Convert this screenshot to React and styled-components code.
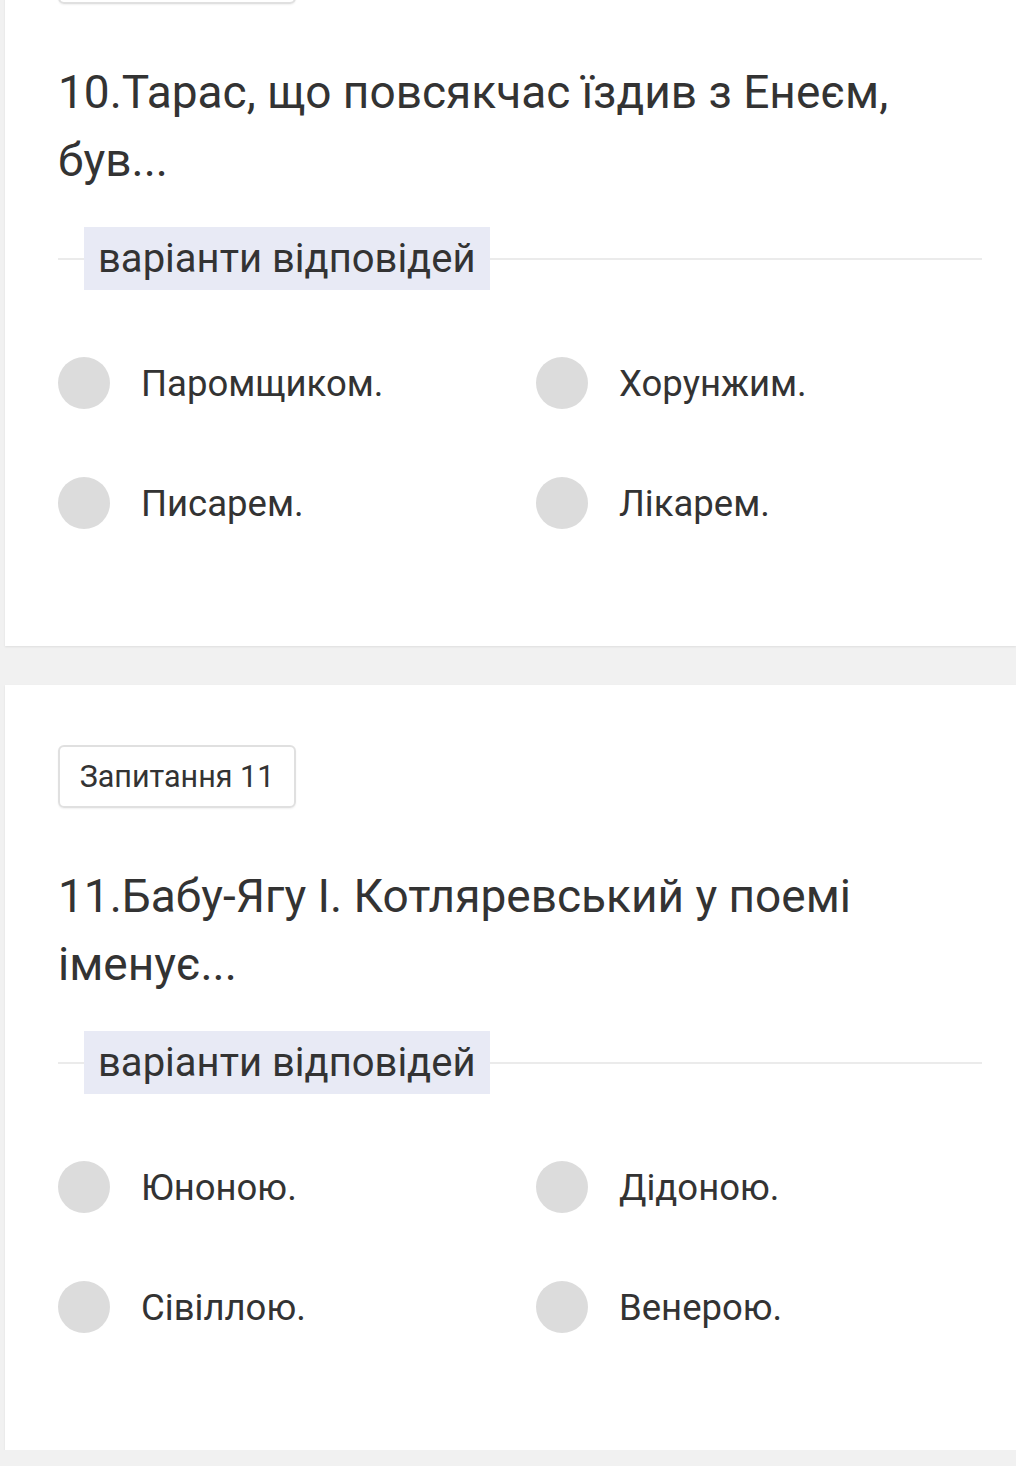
import React from "react";
import styled, { createGlobalStyle } from "styled-components";

const GlobalStyle = createGlobalStyle`
  body {
    margin: 0;
    background: #f1f1f1;
    font-family: Roboto, "Liberation Sans", sans-serif;
    color: #333;
    overflow: hidden;
  }
`;

const questions = [
  {
    num: 10,
    text: "10.Тарас, що повсякчас їздив з Енеєм, був...",
    options: ["Паромщиком.", "Хорунжим.", "Писарем.", "Лікарем."],
  },
  {
    num: 11,
    text: "11.Бабу-Ягу І. Котляревський у поемі іменує...",
    options: ["Юноною.", "Дідоною.", "Сівіллою.", "Венерою."],
  },
];

const App = () => {
  return (
    <>
      <GlobalStyle />
      <Page>
        {questions.map((q) => (
          <Card key={q.num}>
            <Tag>Запитання {q.num}</Tag>
            <Question>{q.text}</Question>
            <Divider>
              <DividerLabel>варіанти відповідей</DividerLabel>
            </Divider>
            <Options>
              {q.options.map((o) => (
                <Option key={o}>
                  <Radio />
                  <span>{o}</span>
                </Option>
              ))}
            </Options>
          </Card>
        ))}
      </Page>
    </>
  );
};

const Page = styled.div`
  display: flex;
  flex-direction: column;
  gap: 39px;
  margin-top: -119px;
  padding-left: 5px;
`;

const Card = styled.section`
  background: #fff;
  height: 765px;
  box-sizing: border-box;
  padding: 60px 34px 0 53px;
  box-shadow: 0 1px 2px rgba(0, 0, 0, 0.08);
`;

const Tag = styled.div`
  display: inline-flex;
  align-items: center;
  justify-content: center;
  box-sizing: border-box;
  width: 238px;
  height: 63px;
  border: 2px solid #e0e0e0;
  border-radius: 6px;
  font-size: 30.5px;
  color: #333;
  box-shadow: 0 1px 2px rgba(0, 0, 0, 0.06);
`;

const Question = styled.h2`
  margin: 54px 60px 0 0;
  font-size: 46px;
  font-weight: 400;
  line-height: 68px;
  color: #333;
`;

const Divider = styled.div`
  margin-top: 33px;
  display: flex;
  align-items: center;
  height: 63px;
  &::before,
  &::after {
    content: "";
    height: 2px;
    background: #ebebeb;
  }
  &::before {
    width: 26px;
  }
  &::after {
    flex: 1;
  }
`;

const DividerLabel = styled.div`
  height: 63px;
  display: flex;
  align-items: center;
  padding: 0 14px;
  background: #e8eaf5;
  font-size: 40px;
  color: #333;
`;

const Options = styled.div`
  margin-top: 33px;
  display: grid;
  grid-template-columns: 478px 1fr;
  grid-auto-rows: 120px;
`;

const Option = styled.div`
  display: flex;
  align-items: center;
  gap: 31px;
  font-size: 36.5px;
  color: #333;
`;

const Radio = styled.span`
  width: 52px;
  height: 52px;
  border-radius: 50%;
  background: #dcdcdc;
  flex-shrink: 0;
`;

export default App;
